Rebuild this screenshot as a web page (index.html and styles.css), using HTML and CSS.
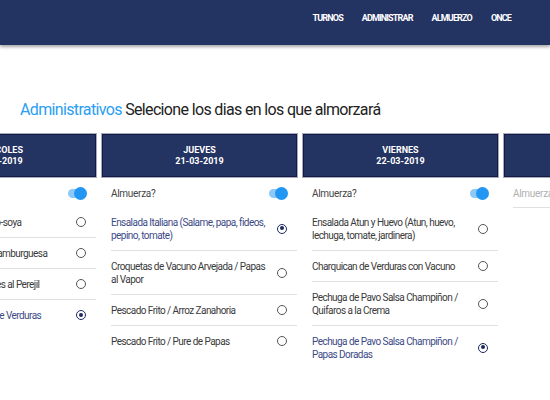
FILE: index.html
```html
<!DOCTYPE html>
<html lang="es">
<head>
<meta charset="utf-8">
<title>Almuerzo</title>
<link rel="stylesheet" href="styles.css">
</head>
<body>
<header class="navbar">
  <nav class="nav">
    <a class="nav-item">TURNOS</a>
    <a class="nav-item">ADMINISTRAR</a>
    <a class="nav-item">ALMUERZO</a>
    <a class="nav-item">ONCE</a>
  </nav>
</header>
<main>
  <h1 class="title"><span class="accent">Administrativos</span> Selecione los dias en los que almorzará</h1>
  <div class="days">
    <section class="day">
      <div class="day-head">MIERCOLES<br>20-03-2019</div>
      <div class="toggle-row"><span class="toggle-label">Almuerza?</span><span class="switch"></span></div>
      <ul class="menu">
        <li class="item"><span class="item-text">Porotos con Churrasco-soya</span><span class="radio"></span></li>
        <li class="item"><span class="item-text">Arroz Mexicano con Hamburguesa</span><span class="radio"></span></li>
        <li class="item"><span class="item-text">Pollo al Jugo / Tallarines al Perejil</span><span class="radio"></span></li>
        <li class="item selected"><span class="item-text">Pollo Arvejado / Pure de Verduras</span><span class="radio"></span></li>
      </ul>
    </section>
    <section class="day">
      <div class="day-head">JUEVES<br>21-03-2019</div>
      <div class="toggle-row"><span class="toggle-label">Almuerza?</span><span class="switch"></span></div>
      <ul class="menu">
        <li class="item selected"><span class="item-text">Ensalada Italiana (Salame, papa, fideos, pepino, tomate)</span><span class="radio"></span></li>
        <li class="item"><span class="item-text">Croquetas de Vacuno Arvejada / Papas al Vapor</span><span class="radio"></span></li>
        <li class="item"><span class="item-text">Pescado Frito / Arroz Zanahoria</span><span class="radio"></span></li>
        <li class="item"><span class="item-text">Pescado Frito / Pure de Papas</span><span class="radio"></span></li>
      </ul>
    </section>
    <section class="day">
      <div class="day-head">VIERNES<br>22-03-2019</div>
      <div class="toggle-row"><span class="toggle-label">Almuerza?</span><span class="switch"></span></div>
      <ul class="menu">
        <li class="item"><span class="item-text">Ensalada Atun y Huevo (Atun, huevo, lechuga, tomate, jardinera)</span><span class="radio"></span></li>
        <li class="item"><span class="item-text">Charquican de Verduras con Vacuno</span><span class="radio"></span></li>
        <li class="item"><span class="item-text">Pechuga de Pavo Salsa Champiñon / Quifaros a la Crema</span><span class="radio"></span></li>
        <li class="item selected"><span class="item-text">Pechuga de Pavo Salsa Champiñon / Papas Doradas</span><span class="radio"></span></li>
      </ul>
    </section>
    <section class="day">
      <div class="day-head">LUNES<br>25-03-2019</div>
      <div class="toggle-row disabled"><span class="toggle-label">Almuerza?</span></div>
    </section>
  </div>
</main>
</body>
</html>
```
FILE: styles.css
```css
html, body {
  margin: 0;
  padding: 0;
  background: #ffffff;
  overflow: hidden;
}
body {
  font-family: Roboto, "Liberation Sans", sans-serif;
  color: #333333;
  width: 550px;
  height: 400px;
}
.navbar {
  height: 45px;
  background: #233362;
  box-shadow: 0 2px 3px rgba(0, 0, 0, 0.35);
  position: relative;
}
.nav {
  display: flex;
  justify-content: flex-end;
  gap: 19px;
  padding: 13px 39px 0 0;
}
.nav-item {
  color: #ffffff;
  font-weight: 700;
  font-size: 9px;
  line-height: 11px;
  letter-spacing: -0.85px;
}
main {
  padding-top: 55px;
}
.title {
  margin: 0 0 14px 20px;
  font-size: 16px;
  line-height: 20px;
  font-weight: 400;
  color: #222222;
  white-space: nowrap;
  letter-spacing: -0.65px;
}
.accent {
  color: #2a9ef2;
}
.days {
  display: flex;
  gap: 6px;
  margin-left: -99px;
}
.day {
  flex: 0 0 195px;
  width: 195px;
}
.day-head {
  height: 41px;
  border: 1px solid #121a45;
  outline: 1px solid #a7aab8;
  background: #233362;
  color: #ffffff;
  font-size: 9px;
  line-height: 11px;
  font-weight: 700;
  text-align: center;
  display: flex;
  align-items: center;
  justify-content: center;
  margin-bottom: 3px;
}
.toggle-row {
  display: flex;
  align-items: center;
  justify-content: space-between;
  height: 27px;
  margin-left: 9px;
  padding-right: 10px;
  font-size: 10px;
  letter-spacing: -0.3px;
  color: #444444;
}
.toggle-row.disabled {
  color: #b0b0b0;
  border-bottom: 1px solid #e0e0e0;
}
.switch {
  position: relative;
  width: 18px;
  height: 9px;
  border-radius: 5px;
  background: #8cc9f7;
}
.switch::after {
  content: "";
  position: absolute;
  right: -1px;
  top: -2px;
  width: 13px;
  height: 13px;
  border-radius: 50%;
  background: #2196f3;
}
.menu {
  list-style: none;
  margin: 0 0 0 9px;
  padding: 0;
}
.item {
  display: flex;
  align-items: center;
  padding: 8.5px 0;
  border-bottom: 1px solid #e0e0e0;
  font-size: 10px;
  line-height: 13px;
  letter-spacing: -0.55px;
  color: #3a3a3a;
}
.item:last-child {
  border-bottom: none;
}
.item-text {
  flex: 1;
  padding-right: 8px;
}
.item.selected {
  color: #3c4a86;
}
.radio {
  flex: 0 0 auto;
  width: 10px;
  height: 10px;
  border: 1px solid #555555;
  border-radius: 50%;
  margin-right: 10px;
  box-sizing: border-box;
  position: relative;
}
.item.selected .radio {
  border: 1.5px solid #1c2a5e;
}
.item.selected .radio::after {
  content: "";
  position: absolute;
  left: 1.5px;
  top: 1.5px;
  width: 4px;
  height: 4px;
  border-radius: 50%;
  background: #1c2a5e;
}
```
